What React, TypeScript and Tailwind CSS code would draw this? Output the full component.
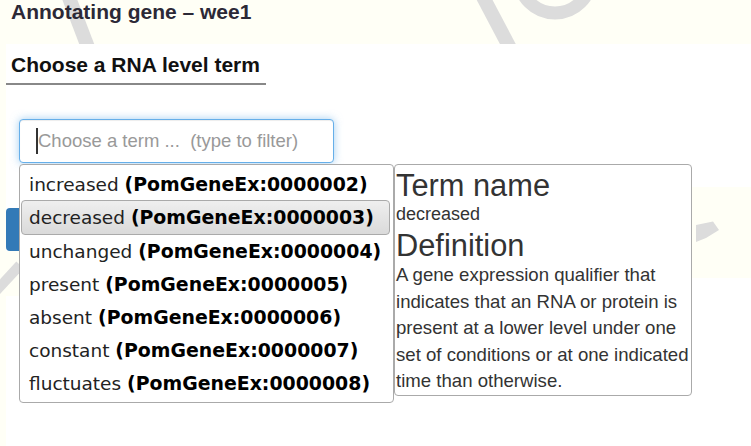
const terms: [string, string][] = [
  ['increased', 'PomGeneEx:0000002'],
  ['decreased', 'PomGeneEx:0000003'],
  ['unchanged', 'PomGeneEx:0000004'],
  ['present', 'PomGeneEx:0000005'],
  ['absent', 'PomGeneEx:0000006'],
  ['constant', 'PomGeneEx:0000007'],
  ['fluctuates', 'PomGeneEx:0000008'],
];

const definition = [
  'A gene expression qualifier that',
  'indicates that an RNA or protein is',
  'present at a lower level under one',
  'set of conditions or at one indicated',
  'time than otherwise.',
];

export default function App() {
  const selected = 'decreased';

  return (
    <div className="relative w-[751px] h-[446px] overflow-hidden bg-[#fffff6] font-['Liberation_Sans',Arial,sans-serif]">
      {/* watermark behind the page */}
      <svg className="absolute left-0 top-0" width="751" height="44" viewBox="0 0 751 44">
        <line x1="68" y1="-5" x2="89" y2="50" stroke="#dcdcdc" strokeWidth="14" />
        <line x1="482" y1="-5" x2="511" y2="50" stroke="#dcdcdc" strokeWidth="14" />
        <circle cx="555" cy="-23" r="36" fill="none" stroke="#dcdcdc" strokeWidth="13" />
      </svg>

      <header className="relative h-[44px] pl-[11px]">
        <h1 className="text-[21px] leading-[24px] font-bold text-[#2c2936]">Annotating gene – wee1</h1>
      </header>

      <main className="relative ml-[6px] h-[402px] bg-white pt-[9px]">
        <h2 className="w-[260px] border-b-2 border-[#888] pl-[5px] pb-[6px] text-[21px] leading-[24px] font-bold text-[#111]">
          Choose a RNA level term
        </h2>

        <div className="ml-[13px] mt-[34px] flex h-[44px] w-[315px] items-center rounded-[4px] border border-[#66afe9] bg-white pl-[16px] shadow-[0_0_8px_rgba(102,175,233,0.6),inset_0_1px_1px_rgba(0,0,0,0.075)]">
          <span className="h-[26px] w-[2px] bg-[#333]" />
          <span className="whitespace-pre text-[18.5px] leading-[22px] text-[#999]">Choose a term ...  (type to filter)</span>
        </div>

        <button className="mt-[45px] h-[43px] w-[120px] rounded-[4px] bg-[#337ab7]" />

        {/* page patches showing through */}
        <div className="absolute -left-[6px] top-[207px] h-[45px] w-[19px] bg-[#fffff6]">
          <svg width="19" height="45" viewBox="0 0 19 45">
            <line x1="-4" y1="40" x2="20" y2="14" stroke="#dcdcdc" strokeWidth="10" />
          </svg>
        </div>
        <div className="absolute left-[684px] top-[143px] h-[91px] w-[61px] bg-[#fffff6]">
          <svg width="61" height="91" viewBox="0 0 61 91">
            <polygon points="6,38 23,34.5 29,43 16,51 6,55" fill="#dcdcdc" />
          </svg>
        </div>

        {/* autocomplete menu */}
        <ul className="absolute left-[13px] top-[120px] w-[375px] rounded-[4px] border border-[#aaa] bg-white pt-[3px] pb-[2px] font-['DejaVu_Sans',Verdana,sans-serif] text-[18.5px]">
          {terms.map(([name, id]) => (
            <li key={id} className="relative flex h-[33.17px] items-center pl-[9px] whitespace-nowrap">
              {name === selected && (
                <span className="absolute -top-px -bottom-px left-[1px] right-[3px] rounded-[4px] border border-[#aaa] bg-gradient-to-b from-[#efefef] to-[#dadada]" />
              )}
              <span className="relative text-[#222]">
                {name} <b className="text-[18.9px] text-black">({id})</b>
              </span>
            </li>
          ))}
        </ul>

        {/* term details */}
        <div className="absolute left-[388px] top-[120px] h-[232px] w-[298px] rounded-[4px] border border-[#aaa] bg-white pl-[1px] pt-[3px] text-[#333]">
          <div className="text-[30.8px] leading-[36px]">Term name</div>
          <div className="text-[18px] leading-[21px]">{selected}</div>
          <div className="mt-[4px] text-[30.8px] leading-[34px]">Definition</div>
          <p className="-mt-[1px] whitespace-nowrap text-[18.6px] leading-[26.6px]">
            {definition.map((line, i) => (
              <span key={i} className="block">{line}</span>
            ))}
          </p>
        </div>
      </main>
    </div>
  );
}
